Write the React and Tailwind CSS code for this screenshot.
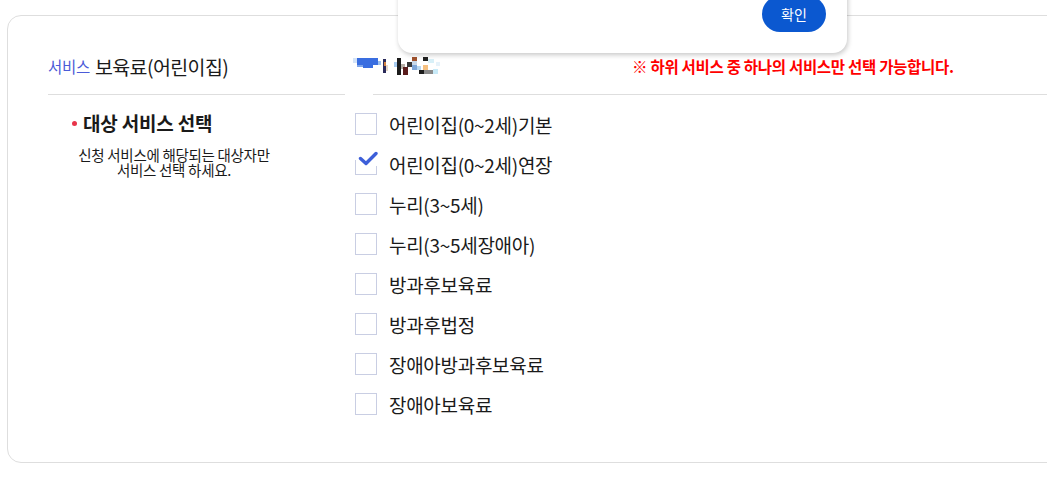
import React from "react";

const items = [
  { label: "어린이집(0~2세)기본", checked: false },
  { label: "어린이집(0~2세)연장", checked: true },
  { label: "누리(3~5세)", checked: false },
  { label: "누리(3~5세장애아)", checked: false },
  { label: "방과후보육료", checked: false },
  { label: "방과후법정", checked: false },
  { label: "장애아방과후보육료", checked: false },
  { label: "장애아보육료", checked: false },
];

function Mosaic() {
  const r = [
    [0, 1, 5, 5, "#d3e3f8"],
    [4, 1, 21, 7, "#3a6ee0"],
    [10, 8, 10, 3, "#3a6ee0"],
    [4, 8, 6, 2, "#7ea5ea"],
    [25, 4, 3, 4, "#9cc0ee"],
    [30, 2, 3, 14, "#2a2a5a"],
    [31, 5, 2, 4, "#d08040"],
    [33, 8, 2, 6, "#e6d7c8"],
    [41, 5, 3, 5, "#a8ccf0"],
    [44, 1, 4, 17, "#1c1c1c"],
    [48, 7, 4, 5, "#b8b0a8"],
    [50, 10, 5, 8, "#5a1c1c"],
    [54, 5, 5, 5, "#383838"],
    [59, 0, 5, 4, "#a0522d"],
    [59, 4, 5, 4, "#c8d8e8"],
    [59, 8, 5, 5, "#7fa7d8"],
    [64, 9, 4, 4, "#b8d8f0"],
    [70, 0, 5, 4, "#222"],
    [70, 8, 5, 5, "#f5c080"],
    [66, 13, 5, 4, "#1c1c1c"],
    [71, 13, 9, 4, "#8a8a8a"],
    [75, 2, 6, 4, "#d8f0f8"],
    [80, 12, 5, 5, "#c8eaf8"],
    [83, 5, 4, 4, "#e6f2fa"],
  ];
  return (
    <svg width="92" height="21" viewBox="0 0 92 21" className="block shrink-0">
      {r.map(([x, y, w, h, c], i) => (
        <rect key={i} x={x} y={y} width={w} height={h} fill={c} />
      ))}
    </svg>
  );
}

function Box({ checked }) {
  return (
    <div className="relative w-[22px] h-[22px] shrink-0">
      <div className="absolute inset-0 border border-[#c9cee3] bg-white" />
      {checked && (
        <>
          <div className="absolute left-[-1px] top-[-2px] w-[24px] h-[9px] bg-white" />
          <div className="absolute right-[-1px] top-[6px] w-[3px] h-[7px] bg-white" />
          <svg
            className="absolute left-[3px] top-[-2px]"
            width="20"
            height="16"
            viewBox="0 0 20 16"
          >
            <path
              d="M2.5 7.5 L8 12.5 L18 2.5"
              fill="none"
              stroke="#3d5fd9"
              strokeWidth="3.4"
              strokeLinecap="round"
              strokeLinejoin="round"
            />
          </svg>
        </>
      )}
    </div>
  );
}

export default function App() {
  return (
    <div
      className="relative w-[1047px] h-[486px] overflow-hidden bg-white"
      style={{ fontFamily: '"Noto Sans CJK KR", "Noto Sans", sans-serif' }}
    >
      <div className="ml-[7px] mt-[15px] w-[1070px] h-[448px] rounded-[14px] border border-[#dedede] bg-white">
        {/* header row */}
        <div className="flex items-end pl-[40px]">
          <div className="w-[297px] h-[79px] border-b border-[#dedede] flex items-center pt-[23px]">
            <span className="text-[15.5px] text-[#4b5bd8] leading-none tracking-[-0.3px]">서비스</span>
            <span className="ml-[5px] text-[19.5px] text-[#1a1a1a] leading-none tracking-[-0.6px]">
              보육료(어린이집)
            </span>
          </div>
          <div className="ml-[28px] flex-1 h-[79px] border-b border-[#dedede] flex items-center pt-[23px]">
            <div className="-ml-[20px] mt-[2px]">
              <Mosaic />
            </div>
            <span className="ml-[187px] text-[15.5px] font-bold text-[#ff0000] leading-none tracking-[-0.3px]">
              ※ 하위 서비스 중 하나의 서비스만 선택 가능합니다.
            </span>
          </div>
        </div>
        {/* body */}
        <div className="flex pl-[40px]">
          <div className="w-[252px] pt-[16px]">
            <div className="flex items-center pl-[24px]">
              <span className="w-[5px] h-[5px] rounded-full bg-[#e8344a] mr-[6px]" />
              <span className="text-[19px] font-bold text-[#1a1a1a] leading-[24px] tracking-[-0.2px]">
                대상 서비스 선택
              </span>
            </div>
            <p className="mt-[12px] text-center text-[14.5px] text-[#1a1a1a] leading-[15px] tracking-[-0.3px]">
              신청 서비스에 해당되는 대상자만
              <br />
              서비스 선택 하세요.
            </p>
          </div>
          <div className="ml-[55px] pt-[9px] flex flex-col">
            {items.map((it) => (
              <div key={it.label} className="h-[40px] flex items-center">
                <Box checked={it.checked} />
                <span className="ml-[12px] text-[19px] text-[#1a1a1a] tracking-[-0.3px] leading-none">
                  {it.label}
                </span>
              </div>
            ))}
          </div>
        </div>
      </div>

      {/* modal overlay */}
      <div className="absolute left-[398px] top-[-40px] w-[449px] h-[93px] bg-white rounded-b-[14px] shadow-[1px_2px_5px_rgba(0,0,0,0.22)] flex items-end justify-end pr-[21px] pb-[21px]">
        <button className="w-[64px] h-[36px] rounded-full bg-[#0b58d0] text-white text-[14px] leading-none">
          확인
        </button>
      </div>
    </div>
  );
}
